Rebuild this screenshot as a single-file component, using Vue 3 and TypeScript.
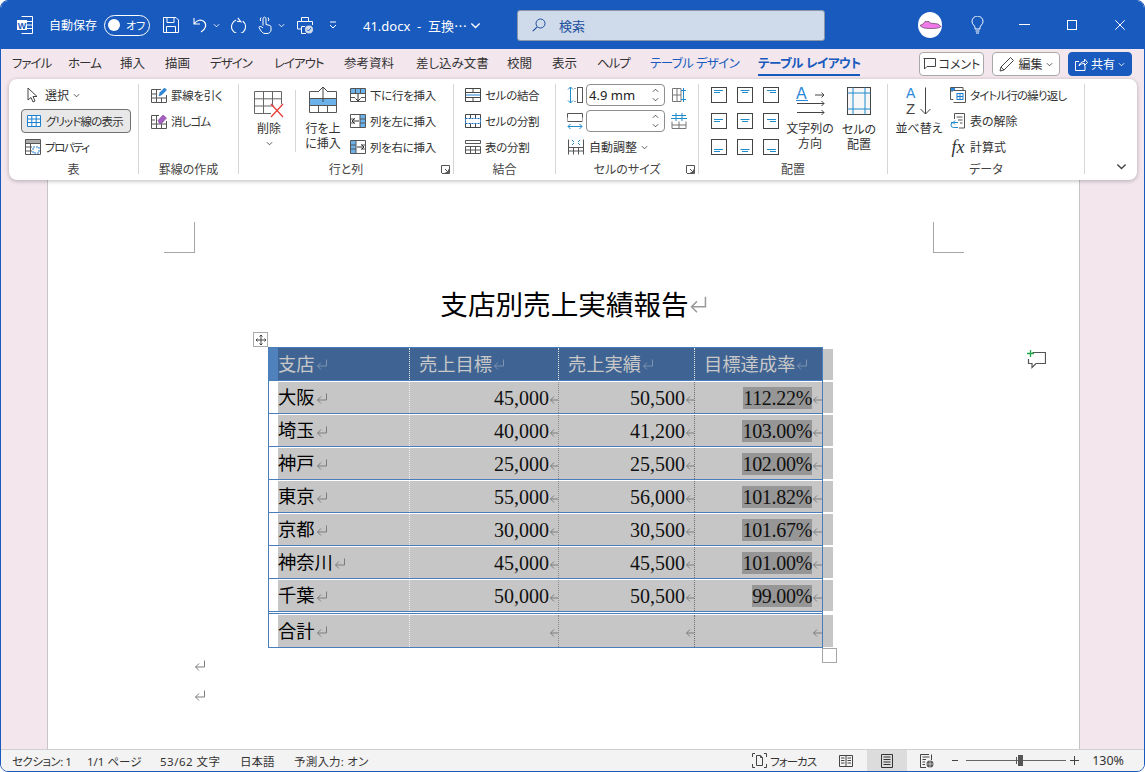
<script setup lang="ts">
interface Row { name: string; target: string; actual: string; rate: string }
const tabs = [
  { label: 'ファイル', w: 56, kana: true }, { label: 'ホーム', w: 52, kana: true }, { label: '挿入', w: 45 }, { label: '描画', w: 45 },
  { label: 'デザイン', w: 64, kana: true }, { label: 'レイアウト', w: 70, kana: true }, { label: '参考資料', w: 72 }, { label: '差し込み文書', w: 91 },
  { label: '校閲', w: 45 }, { label: '表示', w: 45 }, { label: 'ヘルプ', w: 53, kana: true },
  { label: 'テーブル デザイン', w: 108, ctx: true }, { label: 'テーブル レイアウト', w: 102, ctx: true, active: true },
]
const rows: Row[] = [
  { name: '大阪', target: '45,000', actual: '50,500', rate: '112.22%' },
  { name: '埼玉', target: '40,000', actual: '41,200', rate: '103.00%' },
  { name: '神戸', target: '25,000', actual: '25,500', rate: '102.00%' },
  { name: '東京', target: '55,000', actual: '56,000', rate: '101.82%' },
  { name: '京都', target: '30,000', actual: '30,500', rate: '101.67%' },
  { name: '神奈川', target: '45,000', actual: '45,500', rate: '101.00%' },
  { name: '千葉', target: '50,000', actual: '50,500', rate: '99.00%' },
]
const heads = ['支店', '売上目標', '売上実績', '目標達成率']
const aligns = [
  { x: 3, d: 0, y: 3.5 }, { x: 3.5, d: 1.5, y: 3.5 }, { x: 4, d: 3, y: 3.5 },
  { x: 3, d: 0, y: 6.5 }, { x: 3.5, d: 1.5, y: 6.5 }, { x: 4, d: 3, y: 6.5 },
  { x: 3, d: 0, y: 10.5 }, { x: 3.5, d: 1.5, y: 10.5 }, { x: 4, d: 3, y: 10.5 },
]
const statusItems = [
  { label: 'セクション: 1', w: 75, ls: -0.5 }, { label: '1/1 ページ', w: 73, ls: 0 }, { label: '53/62 文字', w: 80, ls: 0.5 },
  { label: '日本語', w: 54, ls: 0 }, { label: '予測入力: オン', w: 80, ls: 0.2 },
]
</script>

<template>
  <div class="win">
    <svg class="defs" aria-hidden="true">
      <symbol id="ret" viewBox="0 0 12 11"><path d="M10.500 .5V7H1.500M5 3.500L1.500 7L5 10.500" fill="none" stroke="currentColor" stroke-width="1" /></symbol>
      <symbol id="chev" viewBox="0 0 8 5"><path d="M1 1L4 4L7 1" fill="none" stroke="currentColor" stroke-width="1" /></symbol>
      <symbol id="launch" viewBox="0 0 9 9"><path d="M.5 8V.5H8.500V8.500H1M4 4L7.500 7.500M7.500 4.500V7.500H4.500" fill="none" stroke="#555" /></symbol>
    </svg>

    <header class="titlebar">
      <svg class="t-word" viewBox="0 0 16 18" width="16" height="18">
        <path d="M4.500 .5H15.500V17.500H4.500M9 5.500H15.500M9 9H15.500M9 12.500H15.500" fill="none" stroke="#fff" />
        <rect x="0" y="4" width="10" height="10" fill="#fff" />
        <text x="5" y="12.500" font-size="9" font-weight="700" text-anchor="middle" fill="#185abd" font-family="Liberation Sans">W</text>
      </svg>
      <span class="t-auto">自動保存</span>
      <div class="t-toggle"><i></i><span>オフ</span></div>
      <svg class="t-save" viewBox="0 0 16 16" width="16" height="16"><path d="M.5 .5H13L15.500 3V15.500H.5ZM4 .5V5.500H11V.5M3.500 15.500V9.500H12.500V15.500" fill="none" stroke="#fff" /></svg>
      <svg class="t-undo" viewBox="0 0 14 16" width="14" height="16"><path d="M1 1V7H7M1.500 6.500C4 3 8 2 11 4.500C14 7.500 13 12 8 15" fill="none" stroke="#fff" stroke-width="1.100" /></svg>
      <svg class="t-chev1 chev" viewBox="0 0 8 5" width="7" height="5"><use href="#chev" /></svg>
      <svg class="t-redo" viewBox="0 0 16 16" width="16" height="16"><path d="M5 1.500L9 4.500L5 5M10.500 3.200A7 7 0 1 1 4 4" fill="none" stroke="#fff" stroke-width="1.100" transform="rotate(15 8 8)" /></svg>
      <svg class="t-touch" viewBox="0 0 15 18" width="15" height="18"><path d="M6 9.500V3C6 .5 9 .5 9 3V8.500L13 9.500C14 10 14 11 14 12V14C14 16 12 17.500 10 17.500H8C6 17.500 5 16 4 15L2 11.500C2 10 4 10 6 12M3.500 5A3.500 3.500 0 0 1 4 1.500M11.500 5A3.500 3.500 0 0 0 11 1.500" fill="none" stroke="#fff" /></svg>
      <svg class="t-chev2 chev" viewBox="0 0 8 5" width="7" height="5"><use href="#chev" /></svg>
      <svg class="t-print" viewBox="0 0 16 17" width="16" height="17"><path d="M4.500 4V.5H11.500V4M4 12H.5V4.500H15.500V8M4.500 9.500H8M4.500 9.500V16.500H9" fill="none" stroke="#fff" /><circle cx="12" cy="12.500" r="4" fill="#cfdaeb" /><path d="M10 12.500L11.500 14L14 11" fill="none" stroke="#185abd" /></svg>
      <svg class="t-cust" viewBox="0 0 8 8" width="8" height="8"><path d="M1 1H7M1 4L4 7L7 4" fill="none" stroke="#fff" /></svg>
      <div class="t-doc"><span>41.docx&nbsp; -&nbsp; 互換⋯</span><svg class="chev" viewBox="0 0 8 5" width="11" height="7"><use href="#chev" /></svg></div>
      <div class="t-search">
        <svg viewBox="0 0 14 14" width="14" height="14"><circle cx="8.500" cy="5.500" r="4.500" fill="none" stroke="#1c4f9c" /><path d="M5.200 8.800L.8 13.200" stroke="#1c4f9c" stroke-width="1.200" /></svg>
        <span>検索</span>
      </div>
      <svg class="t-avatar" viewBox="0 0 24 26" width="24" height="26">
        <ellipse cx="12" cy="13" rx="12" ry="13" fill="#fff" />
        <path d="M2 13.500L5 12L7 9.500H11L12 11L20 12L23 14.500C22 16 18 16.500 12 16.500C8 16.500 4 16 2 13.500Z" fill="#f07ae8" stroke="#4b2a49" stroke-width=".6" />
      </svg>
      <svg class="t-bulb" viewBox="0 0 15 18" width="15" height="18"><path d="M5 13V11.500C5 9.500 2 8.500 2 5.500A5.500 5.500 0 0 1 13 5.500C13 8.500 10 9.500 10 11.500V13ZM5.500 15H9.500M6 17H9" fill="none" stroke="#fff" /></svg>
      <svg class="t-min" viewBox="0 0 11 2" width="11" height="2"><path d="M0 .5H11" stroke="#fff" /></svg>
      <svg class="t-max" viewBox="0 0 10 10" width="10" height="10"><rect x=".5" y=".5" width="9" height="9" fill="none" stroke="#fff" /></svg>
      <svg class="t-close" viewBox="0 0 10 10" width="10" height="10"><path d="M.3 .3L9.700 9.700M9.700 .3L.3 9.700" stroke="#fff" /></svg>
    </header>

    <nav class="tabs">
      <span v-for="t in tabs" :key="t.label" class="tab" :class="{ ctx: t.ctx, active: t.active, kana: t.kana }" :style="{ width: t.w + 'px' }">{{ t.label }}</span>
      <div class="tab-actions">
        <button class="pill p-comment">
          <svg viewBox="0 0 13 12" width="13" height="12"><path d="M.5 .5H12.500V8.500H4L1.500 11V.5" fill="none" stroke="#444" /></svg>コメント
        </button>
        <button class="pill p-edit">
          <svg viewBox="0 0 16 16" width="16" height="16"><path d="M1 15L2 11L11.500 1.500L14.500 4.500L5 14ZM2 11L5 14" fill="none" stroke="#444" /></svg>編集
          <svg class="chev" viewBox="0 0 8 5" width="7" height="5"><use href="#chev" /></svg>
        </button>
        <button class="pill p-share">
          <svg viewBox="0 0 13 13" width="13" height="13"><path d="M10 7.500V12.500H.5V3.500H4M4 8C4.500 5 7 3.500 9.500 3.500V1L12.500 4.500L9.500 7.500V5.500C7 5.500 5.500 6 4 8Z" fill="none" stroke="#fff" /></svg>共有
          <svg class="chev" viewBox="0 0 8 5" width="7" height="5"><use href="#chev" /></svg>
        </button>
      </div>
    </nav>

    <section class="ribbon-wrap">
      <div class="ribbon">
        <div class="group g1">
          <div class="body col">
            <div class="cmd wide">
              <svg viewBox="0 0 16 16" width="16" height="16"><path d="M3 1V13L6 10.500L8 15L10 14L8 9.500L12 9.500Z" fill="#fff" stroke="#444" /></svg>
              選択<svg class="chev small" viewBox="0 0 8 5" width="7" height="5"><use href="#chev" /></svg>
            </div>
            <div class="cmd on tight">
              <svg viewBox="0 0 16 14" width="16" height="14"><path d="M1.500 1.500H14.500V12.500H1.500ZM1.500 5H14.500M1.500 8.500H14.500M5.800 1.500V12.500M10.200 1.500V12.500" fill="#fff" stroke="#1e7fd0" /></svg>
              <span>グリッド線の表示</span>
            </div>
            <div class="cmd tighter">
              <svg viewBox="0 0 16 16" width="16" height="16"><path d="M.5 .5H15.500V15.500H.5Z" fill="#fff" stroke="#555" /><rect x="1" y="1" width="14" height="3" fill="#aaa" /><path d="M.5 4.500H15.500M.5 8H7M.5 12H7M5.500 4.500V15.500" stroke="#555" /><rect x="8" y="8" width="6" height="6" fill="#fff" stroke="#1e7fd0" stroke-dasharray="2 1" /></svg>
              <span>プロパティ</span>
            </div>
          </div>
          <div class="label">表</div>
        </div>

        <div class="group g2">
          <div class="body col">
            <div class="cmd">
              <svg viewBox="0 0 16 16" width="16" height="16"><path d="M.5 2.500H10M.5 2.500V15.500H15.500V8M.5 7H6M.5 11H15.500M5.500 2.500V15.500M10.500 11V15.500" fill="none" stroke="#555" /><path d="M8 9L9 5.500L13.500 1L15.500 3L11 7.500Z" fill="#2b88d8" stroke="#1e6fb5" stroke-width=".6" /></svg>
              罫線を引く
            </div>
            <div class="cmd tight">
              <svg viewBox="0 0 16 16" width="16" height="16"><path d="M.5 2.500H8M.5 2.500V15.500H15.500V8M.5 7H4M.5 11H15.500M5.500 2.500V15.500M10.500 11V15.500" fill="none" stroke="#555" /><path d="M7 7.500L12 2L15.500 5L10.500 10.500H8.500Z" fill="#a45fc0" stroke="#7a3f95" stroke-width=".6" /></svg>
              <span>消しゴム</span>
            </div>
          </div>
          <div class="label">罫線の作成</div>
        </div>

        <div class="group g3">
          <div class="body row">
            <div class="big b-del">
              <svg viewBox="0 0 30 28" width="30" height="28"><path d="M.5 .5H27.500M.5 .5V22.500H17M.5 7.800H27.500M.5 15H20M9.500 .5V22.500M18.500 .5V15M27.500 .5V13" fill="none" stroke="#666" /><path d="M17 13L29 26M29 13L17 26" stroke="#e8413c" stroke-width="1.300" fill="none" /></svg>
              <span>削除</span>
              <svg class="chev bchev" viewBox="0 0 8 5" width="7" height="5"><use href="#chev" /></svg>
            </div>
            <div class="vsep"></div>
            <div class="big b-above">
              <svg viewBox="0 0 28 28" width="28" height="28"><rect x=".5" y="12.500" width="27" height="7" fill="#6cb2ea" /><path d="M.5 5.500H10M18 5.500H27.500V26.500H.5V5.500M.5 12.500H27.500M.5 19.500H27.500M9.500 19.500V26.500M18.500 19.500V26.500" fill="none" stroke="#555" /><path d="M14 16V1M9 6L14 1L19 6" fill="none" stroke="#444" /></svg>
              <span>行を上<br />に挿入</span>
            </div>
            <div class="col c-ins">
              <div class="cmd">
                <svg viewBox="0 0 16 16" width="16" height="16"><rect x="1" y="2" width="14" height="4" fill="#6cb2ea" /><path d="M.5 1.500H15.500V14.500H.5ZM.5 6.500H15.500M5.500 1.500V6.500M10.500 1.500V6.500M.5 10.500H5M11 10.500H15.500" fill="none" stroke="#555" /><path d="M8 7V14M5.500 11.500L8 14L10.500 11.500" fill="none" stroke="#333" /></svg>
                下に行を挿入
              </div>
              <div class="cmd">
                <svg viewBox="0 0 16 16" width="16" height="16"><rect x="10" y="1" width="5" height="14" fill="#6cb2ea" /><path d="M.5 1.500H15.500V14.500H.5ZM.5 6H5M.5 10H5M10 1.500V14.500M10 6H15.500M10 10H15.500" fill="none" stroke="#555" /><path d="M9 8H2M4.500 5.500L2 8L4.500 10.500" fill="none" stroke="#333" /></svg>
                列を左に挿入
              </div>
              <div class="cmd">
                <svg viewBox="0 0 16 16" width="16" height="16"><rect x="1" y="1" width="5" height="14" fill="#6cb2ea" /><path d="M.5 1.500H15.500V14.500H.5ZM.5 6H6M.5 10H6M6 1.500V14.500M11 6H15.500M11 10H15.500" fill="none" stroke="#555" /><path d="M7 8H14M11.500 5.500L14 8L11.500 10.500" fill="none" stroke="#333" /></svg>
                列を右に挿入
              </div>
            </div>
          </div>
          <div class="label">行と列</div>
          <svg class="launch" viewBox="0 0 9 9" width="9" height="9"><use href="#launch" /></svg>
        </div>

        <div class="group g4">
          <div class="body col">
            <div class="cmd">
              <svg viewBox="0 0 16 14" width="16" height="14"><path d="M.5 .5H15.500V13.500H.5ZM.5 4.500H15.500M.5 9.500H15.500M8 .5V4.500M8 9.500V13.500" fill="none" stroke="#444" /><path d="M1 7H15" stroke="#1e7fd0" /></svg>
              セルの結合
            </div>
            <div class="cmd">
              <svg viewBox="0 0 16 14" width="16" height="14"><path d="M.5 .5H15.500V13.500H.5ZM5.500 .5V13.500M10.500 .5V13.500" fill="none" stroke="#444" /><rect x=".5" y="4.500" width="15" height="5" fill="#fff" stroke="#0f6cc4" stroke-width="1.100" stroke-dasharray="2 1" /></svg>
              セルの分割
            </div>
            <div class="cmd">
              <svg viewBox="0 0 16 14" width="16" height="14"><path d="M.5 .5H15.500V3.500H.5ZM.5 6.500H15.500V13.500H.5ZM.5 10H15.500M5.500 6.500V13.500M10.500 6.500V13.500" fill="none" stroke="#555" /></svg>
              表の分割
            </div>
          </div>
          <div class="label">結合</div>
        </div>

        <div class="group g5">
          <div class="body col">
            <div class="sz">
              <svg viewBox="0 0 16 18" width="16" height="18"><path d="M3.500 1V17M1 3.500L3.500 1L6 3.500M1 14.500L3.500 17L6 14.500" fill="none" stroke="#1e8bcd" /><path d="M7.500 2.500H8.500M7.500 15.500H8.500" stroke="#555" /><rect x="10.500" y="1.500" width="5" height="15" fill="none" stroke="#555" /></svg>
              <div class="spin"><span>4.9 mm</span><div class="arrows"><svg class="chev up" viewBox="0 0 8 5" width="7" height="5"><use href="#chev" /></svg><svg class="chev" viewBox="0 0 8 5" width="7" height="5"><use href="#chev" /></svg></div></div>
              <svg viewBox="0 0 16 14" width="16" height="14"><path d="M1.500 .5H10V13.500H1.500ZM1.500 7H10M6 .5V13.500" fill="none" stroke="#777" /><path d="M12.500 0V14M10 2.500H15M10 11.500H15" fill="none" stroke="#1e8bcd" /></svg>
            </div>
            <div class="sz">
              <svg viewBox="0 0 16 18" width="16" height="18"><path d="M.5 5.500V1.500H15.500V5.500M.5 9.500H15.500" fill="none" stroke="#555" /><path d="M.5 5.500V9.500M15.500 5.500V9.500" stroke="#555" stroke-dasharray="1 1" /><path d="M1 14.500H15M3.500 12L1 14.500L3.500 17M12.500 12L15 14.500L12.500 17" fill="none" stroke="#1e8bcd" /></svg>
              <div class="spin"><span></span><div class="arrows"><svg class="chev up" viewBox="0 0 8 5" width="7" height="5"><use href="#chev" /></svg><svg class="chev" viewBox="0 0 8 5" width="7" height="5"><use href="#chev" /></svg></div></div>
              <svg viewBox="0 0 16 16" width="16" height="16"><path d="M1 8.500V15.500H15V8.500M1 12H15M8 8.500V15.500" fill="none" stroke="#777" /><path d="M0 5.500H16M1 2.500H15M5 0V8M11 0V8" fill="none" stroke="#1e8bcd" /></svg>
            </div>
            <div class="cmd wide">
              <svg viewBox="0 0 18 16" width="18" height="16"><path d="M1.500 .5V15.500M16.500 .5V15.500M1.500 8.500H16.500M1.500 12H16.500M6.500 8.500V15.500M11.500 8.500V15.500" fill="none" stroke="#555" /><path d="M5 1L7 3M13 1L11 3M5 6L7 4M13 6L11 4" stroke="#1e8bcd" fill="none" /></svg>
              自動調整<svg class="chev small" viewBox="0 0 8 5" width="7" height="5"><use href="#chev" /></svg>
            </div>
          </div>
          <div class="label">セルのサイズ</div>
          <svg class="launch" viewBox="0 0 9 9" width="9" height="9"><use href="#launch" /></svg>
        </div>

        <div class="group g6">
          <div class="body row">
            <div class="align-grid">
              <svg v-for="(a, i) in aligns" :key="i" viewBox="0 0 16 16" width="16" height="16">
                <rect x=".5" y=".5" width="15" height="15" fill="none" stroke="#444" />
                <path :d="`M${a.x} ${a.y}H${a.x + 9}M${a.x + a.d} ${a.y + 2}H${a.x + a.d + 6}`" stroke="#1e8bcd" fill="none" />
              </svg>
            </div>
            <div class="big b-dir">
              <svg viewBox="0 -4 29 32" width="29" height="32"><text x="0" y="11.500" font-size="16" fill="#2b88d8" font-family="Liberation Sans">A</text><path d="M0 13.500H12" stroke="#2b88d8" /><path d="M19 8H28M25.500 5.500L28 8L25.500 10.500M1 16.500H28M25.500 14L28 16.500L25.500 19M1 25.500H28M25.500 23L28 25.500L25.500 28" fill="none" stroke="#444" /></svg>
              <span>文字列の<br />方向</span>
            </div>
            <div class="big b-cell">
              <svg viewBox="0 0 24 28" width="24" height="28"><rect x=".5" y=".5" width="23" height="27" fill="#f7f7f7" stroke="#444" /><path d="M6 .5V27.500M18 .5V27.500M.5 6H23.500M.5 22H23.500" stroke="#1e8bcd" fill="none" /></svg>
              <span>セルの<br />配置</span>
            </div>
          </div>
          <div class="label">配置</div>
        </div>

        <div class="group g7">
          <div class="body row">
            <div class="big b-sort">
              <svg viewBox="0 -4 30 36" width="30" height="36"><text x="2" y="11" font-size="14" fill="#2b88d8" font-family="Liberation Sans">A</text><text x="2" y="27" font-size="15" fill="#444" font-family="Liberation Sans">Z</text><path d="M21.500 .5V27M16.500 22L21.500 27L26.500 22" fill="none" stroke="#444" /></svg>
              <span>並べ替え</span>
            </div>
            <div class="col c-data">
              <div class="cmd tight">
                <svg viewBox="0 0 16 16" width="16" height="16"><path d="M3.500 12.500H.5V.5H13V3M1 4H3" fill="none" stroke="#555" /><rect x="1" y="1" width="4" height="3" fill="#2b88d8" /><path d="M3.500 3.500H15.500V15.500H3.500" fill="#fff" stroke="#555" /><rect x="7" y="6.500" width="6" height="6" fill="#fff" stroke="#1e7fd0" /><path d="M7 9.500H13M10 6.500V12.500" stroke="#1e7fd0" /></svg>
                <span>タイトル行の繰り返し</span>
              </div>
              <div class="cmd wide">
                <svg viewBox="0 0 16 16" width="16" height="16"><path d="M4.500 6V.5H14.500V15H9M6.500 4H12.500M8 7H12.500M10 10H12.500" fill="none" stroke="#555" /><path d="M8 9.500H3.500A2.500 2.500 0 0 0 3.500 14.500H8M1 9.500H4M5 7.500L3 9.500L5 11.500" fill="none" stroke="#1e8bcd" /></svg>
                表の解除
              </div>
              <div class="cmd wide">
                <span class="fx">fx</span>
                計算式
              </div>
            </div>
          </div>
          <div class="label">データ</div>
        </div>

        <div class="rb-end">
          <svg class="chev" viewBox="0 0 8 5" width="11" height="7"><use href="#chev" /></svg>
        </div>
      </div>
    </section>

    <main class="doc">
      <div class="page">
        <i class="crop crop-l"></i>
        <i class="crop crop-r"></i>
        <svg class="comment-flag" viewBox="0 0 20 20" width="20" height="20"><path d="M6.500 3.500H19.500V14.500H10L6 18.500V14.500H2.500V10" fill="none" stroke="#555" stroke-width="1.200" /><path d="M4.500 1V8M1 4.500H8" stroke="#1fa84a" stroke-width="1.300" /></svg>
        <h1 class="title"><span>支店別売上実績報告</span><svg class="ret title-ret"><use href="#ret" /></svg></h1>

        <div class="table">
          <div class="move"><svg viewBox="0 0 12 12" width="12" height="12"><path d="M6 1V11M1 6H11M4.500 2.500L6 1L7.500 2.500M4.500 9.500L6 11L7.500 9.500M2.500 4.500L1 6L2.500 7.500M9.500 4.500L11 6L9.500 7.500" fill="none" stroke="#444" /></svg></div>

          <div class="line head">
            <div class="tr">
              <div v-for="(h, i) in heads" :key="h" class="td" :class="'c' + (i + 1)">
                <span class="jp">{{ h }}</span><svg class="ret"><use href="#ret" /></svg>
              </div>
            </div>
            <div class="eor"></div>
          </div>

          <div v-for="r in rows" :key="r.name" class="line">
            <div class="tr">
              <div class="td c1"><span class="jp">{{ r.name }}</span><svg class="ret"><use href="#ret" /></svg></div>
              <div class="td c2 num"><span>{{ r.target }}</span><svg class="ret"><use href="#ret" /></svg></div>
              <div class="td c3 num"><span>{{ r.actual }}</span><svg class="ret"><use href="#ret" /></svg></div>
              <div class="td c4 num"><span class="hl">{{ r.rate }}</span><svg class="ret"><use href="#ret" /></svg></div>
            </div>
            <div class="eor"></div>
          </div>

          <div class="line total">
            <div class="tr">
              <div class="td c1"><span class="jp">合計</span><svg class="ret"><use href="#ret" /></svg></div>
              <div class="td c2 num"><svg class="ret"><use href="#ret" /></svg></div>
              <div class="td c3 num"><svg class="ret"><use href="#ret" /></svg></div>
              <div class="td c4 num"><svg class="ret"><use href="#ret" /></svg></div>
            </div>
            <div class="eor"></div>
          </div>
          <i class="resize"></i>
        </div>

        <div class="para first"><svg class="ret"><use href="#ret" /></svg></div>
        <div class="para"><svg class="ret"><use href="#ret" /></svg></div>
      </div>
    </main>

    <footer class="status">
      <span v-for="s in statusItems" :key="s.label" class="st" :style="{ width: s.w + 'px', letterSpacing: s.ls + 'px' }">{{ s.label }}</span>
      <div class="st-right">
        <svg class="s-focus" viewBox="0 0 15 15" width="15" height="15"><path d="M.5 4V.5H3M12 .5H14.500V4M.5 11V14.500H3M12 14.500H14.500V11" fill="none" stroke="#444" /><path d="M4.500 2.500H8.500L10.500 4.500V12.500H4.500ZM8.500 2.500V4.500H10.500" fill="none" stroke="#444" /></svg>
        <span class="s-flabel">フォーカス</span>
        <svg class="s-read" viewBox="0 0 14 14" width="14" height="14"><path d="M.5 1.500H13.500V12.500H.5ZM7 1.500V12.500M2 4H5.500M2 6.500H5.500M2 9H5.500M8.500 4H12M8.500 6.500H12M8.500 9H12" fill="none" stroke="#444" /></svg>
        <div class="s-print"><svg viewBox="0 0 12 14" width="12" height="14"><path d="M.5 .5H11.500V13.500H.5ZM2.500 3H9.500M2.500 5.500H9.500M2.500 8H9.500M2.500 10.500H9.500" fill="none" stroke="#333" /></svg></div>
        <svg class="s-web" viewBox="0 0 14 14" width="14" height="14"><path d="M9 .5H.5V13.500H6M11.500 .5V6M2.500 3H9.500M2.500 5.500H6M2.500 8H5M2.500 10.500H5" fill="none" stroke="#444" /><circle cx="10" cy="10" r="3.500" fill="#555" /><path d="M6.500 10H13.500M10 6.500V13.500" stroke="#eee" stroke-width=".7" /></svg>
        <span class="s-minus"></span>
        <div class="s-slider"><i class="tick"></i><i class="thumb"></i></div>
        <svg class="s-plus" viewBox="0 0 9 9" width="9" height="9"><path d="M0 4.500H9M4.500 0V9" stroke="#444" /></svg>
        <span class="s-zoom">130%</span>
      </div>
    </footer>
  </div>
</template>

<style>
html, body { margin: 0; background: #fff; }
</style>

<style scoped>
* { box-sizing: border-box; }
.win {
  width: 1145px; height: 772px; overflow: hidden; position: relative;
  display: flex; flex-direction: column;
  border: 1px solid #185abd; border-radius: 8px;
  background: #f3e7ed; color: #333;
  font-family: "Noto Sans", "Noto Sans CJK JP", sans-serif; font-size: 12px;
  font-feature-settings: "palt";
}
.defs { position: absolute; width: 0; height: 0; }
svg { flex: none; display: block; }
.chev { color: #444; }

/* title bar */
.titlebar { height: 48px; flex: none; background: #185abd; color: #fff; display: flex; align-items: center; }
.titlebar .chev { color: #fff; }
.t-word { margin-left: 16px; }
.t-auto { margin-left: 16px; width: 48px; font-size: 12px; white-space: nowrap; }
.t-toggle { margin-left: 7px; width: 46px; height: 21px; border: 1.5px solid #fff; border-radius: 11px; display: flex; align-items: center; padding-left: 3px; font-size: 11px; }
.t-toggle i { width: 12px; height: 12px; border-radius: 50%; background: #fff; margin-right: 6px; }
.t-save { margin-left: 13px; }
.t-undo { margin-left: 14px; }
.t-chev1 { margin-left: 6px; }
.t-redo { margin-left: 11px; }
.t-touch { margin-left: 10px; }
.t-chev2 { margin-left: 6px; }
.t-print { margin-left: 12px; }
.t-cust { margin-left: 16px; }
.t-doc { margin-left: 26px; width: 118px; display: flex; align-items: center; justify-content: space-between; font-size: 13px; white-space: nowrap; }
.t-search { margin-left: 36px; width: 308px; height: 31px; background: #cfdaeb; border: 1px solid #8b97a8; border-radius: 3px; display: flex; align-items: center; padding-left: 14px; gap: 13px; color: #1c4f9c; font-size: 13px; }
.t-avatar { margin-left: 93px; }
.t-bulb { margin-left: 28px; }
.t-min { margin-left: 34px; }
.t-max { margin-left: 37px; }
.t-close { margin-left: 38px; }

/* tabs */
.tabs { height: 30px; flex: none; display: flex; align-items: center; padding-left: 11px; color: #333; }
.tab { flex: none; white-space: nowrap; font-size: 12.5px; position: relative; height: 30px; line-height: 30px; }
.tab.kana { letter-spacing: -1px; }
.tab.ctx { color: #185abd; letter-spacing: -.6px; }
.tab.active { font-weight: 700; letter-spacing: -.4px; }
.tab.active::after { content: ""; position: absolute; left: 0; right: 0; bottom: 3px; height: 2px; background: #185abd; }
.tab-actions { margin-left: 59px; display: flex; gap: 8px; }
.pill { height: 24px; border: 1px solid #a9a9a9; border-radius: 4px; background: #fff; font: inherit; font-size: 12px; color: #333; display: flex; align-items: center; justify-content: center; padding: 0; gap: 3px; }
.p-comment { width: 65px; }
.p-edit { width: 68px; }
.p-share { width: 64px; background: #185abd; border-color: #185abd; color: #fff; }
.p-share .chev { color: #fff; }

/* ribbon */
.ribbon-wrap { height: 101px; flex: none; padding: 0 7px 0 8px; position: relative; z-index: 2; }
.ribbon { height: 101px; background: #fff; border-radius: 8px; box-shadow: 0 1px 4px rgba(0, 0, 0, .28); display: flex; padding-top: 3px; }
.group { position: relative; flex: none; height: 96px; display: flex; flex-direction: column; }
.group::after { content: ""; position: absolute; right: 0; top: 2px; bottom: 4px; width: 1px; background: #d6d6d6; }
.body { height: 80px; }
.col { display: flex; flex-direction: column; }
.row { display: flex; }
.label { height: 16px; line-height: 16px; text-align: center; font-size: 12px; color: #444; padding-right: 1px; }
.launch { position: absolute; right: 4px; bottom: 4px; }
.g1 { width: 130px; }
.g2 { width: 100px; }
.g3 { width: 215px; }
.g4 { width: 102px; }
.g5 { width: 143px; }
.g6 { width: 189px; }
.g7 { width: 197px; }
.g1 .body { padding-left: 16px; }
.g2 .body { padding-left: 12px; }
.g4 .body { padding-left: 11px; }
.g5 .body { padding-left: 11px; }
.cmd { height: 26px; display: flex; align-items: center; gap: 4px; white-space: nowrap; color: #333; font-size: 11.5px; letter-spacing: -.3px; flex: none; }
.cmd.wide { font-size: 12px; letter-spacing: 0; }
.cmd.tight { letter-spacing: -.85px; }
.cmd.tighter { letter-spacing: -1.5px; }
.cmd.on { width: 110px; height: 24px; margin: 1px 0 1px -4px; padding-left: 4px; background: #e8e8e8; border: 1px solid #707070; border-radius: 4px; }
.chev.small { margin-left: 0; }
.big { display: flex; flex-direction: column; align-items: center; flex: none; text-align: center; line-height: 15px; font-size: 12px; color: #333; white-space: nowrap; }
.b-del { width: 56px; padding-top: 9px; padding-left: 4px; }
.b-del span { margin-top: 2px; }
.bchev { margin-top: 5px; }
.vsep { width: 1px; height: 62px; margin-top: 8px; background: #d6d6d6; flex: none; }
.b-above { width: 54px; padding-top: 4px; }
.b-above span, .b-cell span { margin-top: 7px; }
.b-dir span { margin-top: 6px; }
.b-sort span { margin-top: 2px; }
.c-ins { margin-left: 0; }
.g6 .body { padding-left: 12px; }
.align-grid { display: grid; grid-template-columns: repeat(3, 16px); grid-auto-rows: 26px; column-gap: 10px; align-items: center; flex: none; }
.b-dir { width: 54px; margin-left: 4px; padding-top: 1px; }
.b-cell { width: 44px; padding-top: 5px; }
.b-sort { width: 48px; margin-left: 7px; padding-top: 1px; }
.c-data { margin-left: 7px; }
.fx { width: 16px; text-align: center; font-family: "Liberation Serif", serif; font-style: italic; font-size: 18px; font-weight: 400; color: #333; }
.sz { height: 26px; display: flex; align-items: center; gap: 3px; flex: none; }
.spin { width: 79px; height: 22px; border: 1px solid #8e8e8e; border-radius: 4px; display: flex; align-items: center; justify-content: space-between; padding: 0 5px 0 2px; font-size: 13px; color: #222; font-family: "Noto Sans", sans-serif; margin-right: 3px; }
.arrows { display: flex; flex-direction: column; gap: 4px; }
.up { transform: rotate(180deg); }
.rb-end { flex: 1; display: flex; justify-content: flex-end; align-items: flex-end; padding: 0 10px 10px 0; }

/* document */
.doc { height: 569px; flex: none; background: #f3e7ed; }
.page { position: relative; margin-left: 46px; width: 1033px; height: 569px; background: #fff; border-left: 1px solid #c6c6c6; border-right: 1px solid #c6c6c6; padding-top: 103px; overflow: hidden; }
.crop { position: absolute; top: 42px; width: 31px; height: 31px; }
.crop-l { left: 116px; border-right: 1px solid #a6a6a6; border-bottom: 1px solid #a6a6a6; }
.crop-r { left: 885px; border-left: 1px solid #a6a6a6; border-bottom: 1px solid #a6a6a6; }
.comment-flag { position: absolute; left: 978px; top: 169px; }
.title { margin: 0; height: 40px; padding-left: 2px; display: flex; align-items: center; justify-content: center; font-size: 27.6px; font-weight: 400; color: #000; font-feature-settings: normal; font-family: "Noto Sans CJK JP", sans-serif; }
.ret { width: 12px; height: 11px; color: #7c7c7c; flex: none; }
.ret.title-ret { margin-right: -19px; width: 19px; height: 17px; color: #9a9a9a; margin-top: 3px; }

.table { position: relative; margin: 24px 0 0 220px; width: 565px; }
.move { position: absolute; left: -15px; top: -15px; width: 15px; height: 15px; border: 1px solid #aaa; background: #fff; display: flex; align-items: center; justify-content: center; }
.line { display: flex; height: 33px; }
.tr { width: 555px; display: grid; grid-template-columns: 131px 149px 136px 128px; border: 1px solid #4a7ebb; border-width: 1px 1px 0 1px; padding: 1px 0 0 9px; background: #fff; flex: none; }
.eor { width: 10px; background: #c6c6c6; margin-top: 2px; }
.td { background: #c6c6c6; display: flex; align-items: center; font-family: "Liberation Serif", "Noto Sans CJK JP", serif; font-feature-settings: normal; color: #000; height: 31px; position: relative; padding-top: 1px; overflow: hidden; }
.jp { font-size: 18.3px; line-height: 30px; }
.td.c1 { padding-left: 0; }
.td.c1 .ret { margin-left: 1px; }
.td.c2, .td.c3, .td.c4 { border-left: 1px dotted #f2f2f2; padding-left: 9px; }
.td.c3 { border-left-color: #8a8a8a; }
.td.c4 { border-left-color: #6e6e6e; }
.num { justify-content: flex-end; font-size: 20px; color: #111; }
.num .ret { margin-right: -3px; }
.td.c4 .ret { margin-right: -2px; }
.hl { background: #969696; height: 22px; line-height: 22px; padding: 0; letter-spacing: -.3px; display: block; }

.head .tr { background: #4f81bd; padding-top: 0; }
.head .td { background: #3f6392; color: #c8c8c8; height: 32px; padding-top: 1px; }
.head .td.c2, .head .td.c3, .head .td.c4 { border-left-color: #e8e8e8; }
.head .ret { color: #7e93b0; margin-left: 1px; }

.total { height: 37px; }
.total .tr { border-top: 3px double #4a7ebb; border-bottom: 1px solid #4a7ebb; padding-top: 1px; }
.total .td { height: 32px; }
.total .eor { margin-top: 4px; margin-bottom: 1px; }
.resize { position: absolute; left: 554px; bottom: -15px; width: 15px; height: 15px; border: 1px solid #a6a6a6; background: #fff; }
.para { margin-left: 146px; height: 30px; display: flex; align-items: center; }
.para.first { margin-top: 2px; }

/* status bar */
.status { height: 22px; flex: none; background: #f3f3f3; border-top: 1px solid #cfcfcf; display: flex; align-items: center; padding-left: 11px; font-size: 11.5px; color: #333; position: relative; }
.st { flex: none; white-space: nowrap; }
.st-right { margin-left: auto; display: flex; align-items: center; height: 21px; }
.s-flabel { margin: 0 24px 0 3px; width: 45px; white-space: nowrap; letter-spacing: -1px; }
.s-read { margin-right: 14px; }
.s-print { width: 40px; height: 21px; background: #dcdcdc; display: flex; align-items: center; justify-content: center; margin-right: 13px; }
.s-minus { width: 6px; height: 1px; background: #444; margin-left: 18px; }
.s-slider { width: 100px; height: 1px; background: #666; margin-left: 8px; position: relative; }
.tick { position: absolute; left: 50px; top: -3px; width: 1px; height: 7px; background: #555; }
.thumb { position: absolute; left: 52px; top: -5px; width: 5px; height: 11px; background: #555; }
.s-plus { margin-left: 4px; }
.s-zoom { margin: 0 20px 0 13px; white-space: nowrap; font-size: 12.5px; }
</style>
